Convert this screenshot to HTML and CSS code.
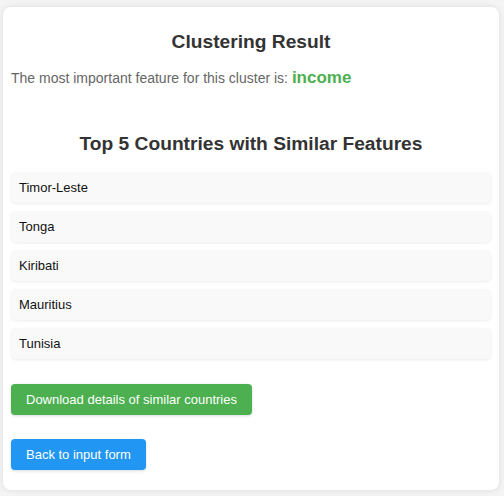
FILE: index.html
```html
<!DOCTYPE html>
<html>
<head>
<meta charset="utf-8">
<link rel="stylesheet" href="styles.css">
</head>
<body>
<div class="card">
  <h2 class="title">Clustering Result</h2>
  <p class="feature">The most important feature for this cluster is: <span class="highlight">income</span></p>
  <h3 class="subtitle">Top 5 Countries with Similar Features</h3>
  <ul class="list">
    <li class="item">Timor-Leste</li>
    <li class="item">Tonga</li>
    <li class="item">Kiribati</li>
    <li class="item">Mauritius</li>
    <li class="item">Tunisia</li>
  </ul>
  <div class="actions">
    <a class="btn btn-green" href="#">Download details of similar countries</a>
    <a class="btn btn-blue" href="#">Back to input form</a>
  </div>
</div>
</body>
</html>
```

FILE: styles.css
```css
html, body {
  margin: 0;
  padding: 0;
  background: #f4f4f4;
  font-family: "Liberation Sans", Arial, sans-serif;
}
body {
  padding: 7px 5px 6px 3px;
}
.card {
  background: #fff;
  border-radius: 8px;
  box-shadow: 0 0 6px rgba(0,0,0,0.1);
  padding: 8px 8px 20px 8px;
}
.title {
  margin: 16px 0 18px;
  text-align: center;
  font-size: 19.2px;
  line-height: 21px;
  color: #333;
}
.feature {
  margin: 0;
  font-size: 14px;
  line-height: 16px;
  color: #666;
}
.highlight {
  color: #4caf50;
  font-weight: bold;
  font-size: 17px;
}
.subtitle {
  margin: 47px 0 17px;
  text-align: center;
  font-size: 19.2px;
  line-height: 22px;
  color: #333;
}
.list {
  list-style: none;
  margin: 0;
  padding: 0;
  display: flex;
  flex-direction: column;
  gap: 8px;
}
.item {
  background: #f9f9f9;
  border-radius: 5px;
  box-shadow: 0 1px 3px rgba(0,0,0,0.08);
  padding: 8px;
  font-size: 13px;
  line-height: 15px;
  color: #111;
}
.actions {
  margin-top: 25px;
  display: flex;
  flex-direction: column;
  align-items: flex-start;
  gap: 24px;
}
.btn {
  display: inline-block;
  padding: 8px 15px;
  font-size: 13px;
  line-height: 15px;
  color: #fff;
  text-decoration: none;
  border-radius: 4px;
  box-shadow: 0 1px 3px rgba(0,0,0,0.15);
}
.btn-green { background: #4caf50; }
.btn-blue { background: #2196f3; }
```
